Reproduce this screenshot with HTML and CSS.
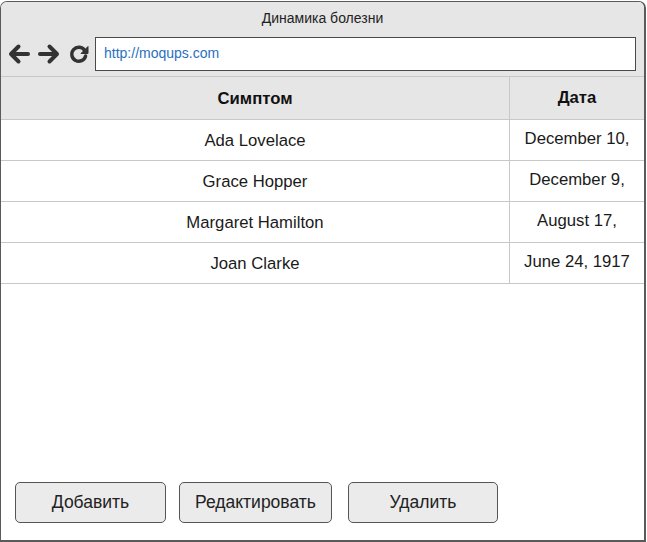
FILE: index.html
```html
<!DOCTYPE html>
<html>
<head>
<meta charset="utf-8">
<link rel="stylesheet" href="styles.css">
</head>
<body>
<div class="window">
  <div class="titlebar">
    <div class="title">Динамика болезни</div>
    <div class="navrow">
      <svg class="icon" width="24" height="22" viewBox="0 0 24 22"><path d="M21 11H4.5M11.5 3.5L4 11L11.5 18.5" fill="none" stroke="#333" stroke-width="4" stroke-linecap="round" stroke-linejoin="round"/></svg>
      <svg class="icon" width="24" height="22" viewBox="0 0 24 22"><path d="M3 11H19.5M12.5 3.5L20 11L12.5 18.5" fill="none" stroke="#333" stroke-width="4" stroke-linecap="round" stroke-linejoin="round"/></svg>
      <svg class="icon reload" width="22" height="22" viewBox="0 0 22 22"><path d="M16.5 7.2A7 7 0 1 0 17.6 13" fill="none" stroke="#333" stroke-width="3.4" stroke-linecap="round"/><path d="M20 3.5V10.5H13Z" fill="#333" stroke="#333" stroke-width="1" stroke-linejoin="round"/></svg>
      <div class="address">http://moqups.com</div>
    </div>
  </div>
  <div class="table">
    <div class="row head">
      <div class="c1">Симптом</div>
      <div class="c2">Дата</div>
    </div>
    <div class="row">
      <div class="c1">Ada Lovelace</div>
      <div class="c2"><div class="clip">December 10,</div></div>
    </div>
    <div class="row">
      <div class="c1">Grace Hopper</div>
      <div class="c2"><div class="clip">December 9,</div></div>
    </div>
    <div class="row">
      <div class="c1">Margaret Hamilton</div>
      <div class="c2"><div class="clip">August 17,</div></div>
    </div>
    <div class="row">
      <div class="c1">Joan Clarke</div>
      <div class="c2"><div class="clip">June 24, 1917</div></div>
    </div>
  </div>
  <div class="spacer"></div>
  <div class="buttons">
    <div class="btn b1">Добавить</div>
    <div class="btn b2">Редактировать</div>
    <div class="btn b3">Удалить</div>
  </div>
</div>
</body>
</html>
```

FILE: styles.css
```css
html, body {
  margin: 0;
  padding: 0;
  background: #ffffff;
}
body {
  padding-top: 1px;
  font-family: "Liberation Sans", Arial, sans-serif;
  color: #1a1a1a;
}
.window {
  box-sizing: border-box;
  width: 646px;
  height: 541px;
  border: 1px solid #5a5a5a;
  border-right-width: 2px;
  border-bottom-width: 2px;
  border-radius: 7px 7px 0 0;
  overflow: hidden;
  display: flex;
  flex-direction: column;
  background: #fff;
}
.titlebar {
  background: #e6e6e6;
  height: 74px;
  box-sizing: border-box;
}
.title {
  height: 35px;
  line-height: 32px;
  text-align: center;
  font-size: 14px;
  color: #222;
}
.navrow {
  display: flex;
  align-items: center;
  padding-left: 6px;
  height: 34px;
}
.icon {
  flex: none;
  margin-right: 6px;
}
.icon.reload {
  margin-left: 1px;
  margin-right: 5px;
}
.address {
  box-sizing: border-box;
  width: 541px;
  height: 34px;
  border: 1px solid #4a4a4a;
  background: #fff;
  color: #2a6fc0;
  font-size: 14px;
  line-height: 30px;
  padding-left: 8px;
}
.table {
  border-top: 1px solid #c8c8c8;
}
.row {
  display: flex;
  height: 40px;
  border-bottom: 1px solid #c8c8c8;
  font-size: 16.7px;
}
.row.head {
  height: 42px;
  background: #e6e6e6;
  font-weight: bold;
  color: #111;
}
.c1 {
  width: 509px;
  flex: none;
  border-right: 1px solid #c8c8c8;
  display: flex;
  align-items: center;
  justify-content: center;
  padding-top: 1px;
  box-sizing: border-box;
}
.c2 {
  flex: 1;
  display: flex;
  align-items: center;
  justify-content: center;
  padding: 0 6px;
  text-align: center;
}
.clip {
  line-height: 20px;
  white-space: nowrap;
  margin-top: -3px;
}
.spacer {
  flex: 1;
}
.buttons {
  display: flex;
  padding: 0 0 17px 14px;
}
.btn {
  box-sizing: border-box;
  height: 41px;
  border: 1px solid #555;
  border-radius: 5px;
  background: #ebebeb;
  display: flex;
  align-items: center;
  justify-content: center;
  font-size: 17.5px;
  color: #222;
}
.b1 { width: 151px; }
.b2 { width: 153px; margin-left: 13px; }
.b3 { width: 150px; margin-left: 16px; }
```
